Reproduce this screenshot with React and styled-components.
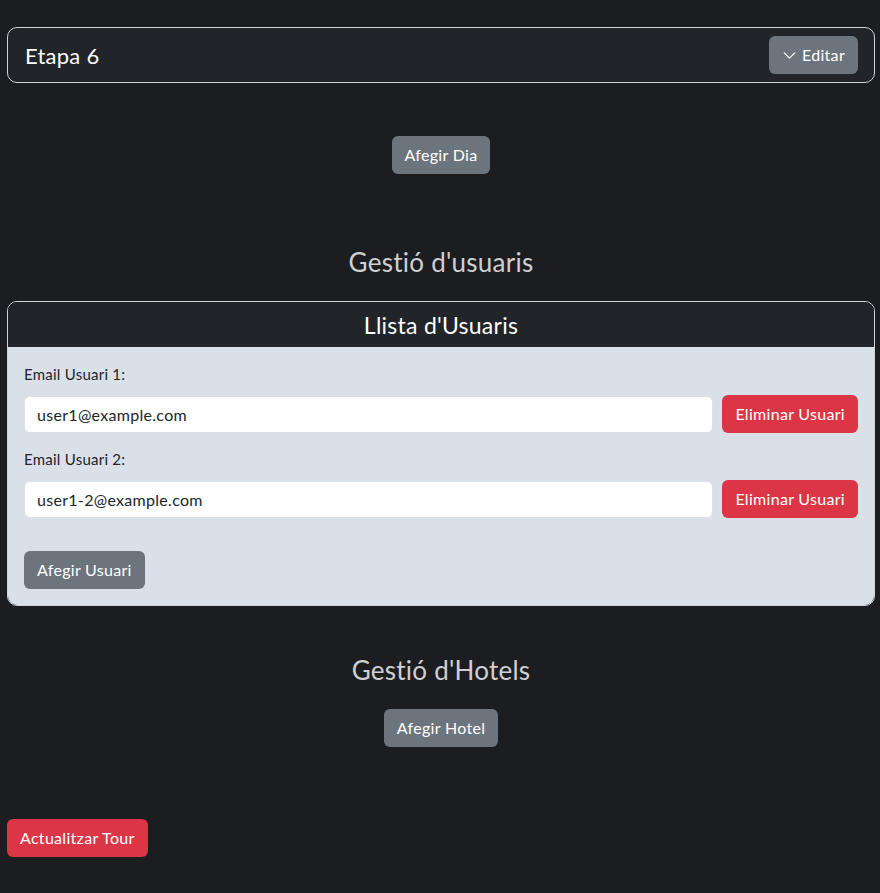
import styled, { createGlobalStyle } from "styled-components";
import { ChevronDown } from "lucide-react";

const GlobalStyle = createGlobalStyle`
    body {
        margin: 0;
        background: #1c1d20;
        font-family: "Lato", "Open Sans", sans-serif;
        color: #dee2e6;
        letter-spacing: 0.25px;
    }
    * { box-sizing: border-box; }
`;

const users = ["user1@example.com", "user1-2@example.com"];

export default function App() {
    return (
        <>
            <GlobalStyle />
            <Page>
                <StageCard>
                    <StageTitle>Etapa 6</StageTitle>
                    <Button $gap={2}>
                        <ChevronDown size={21} strokeWidth={1.4} />
                        Editar
                    </Button>
                </StageCard>

                <Center $top={53}>
                    <Button>Afegir Dia</Button>
                </Center>

                <SectionTitle $top={73}>Gestió d'usuaris</SectionTitle>

                <UsersCard>
                    <CardHeader>Llista d'Usuaris</CardHeader>
                    <CardBody>
                        {users.map((email, i) => (
                            <Field key={email}>
                                <Label>Email Usuari {i + 1}:</Label>
                                <Row>
                                    <Input type="email" defaultValue={email} />
                                    <Button $variant="danger">Eliminar Usuari</Button>
                                </Row>
                            </Field>
                        ))}
                        <AddRow>
                            <Button>Afegir Usuari</Button>
                        </AddRow>
                    </CardBody>
                </UsersCard>

                <SectionTitle $top={49}>Gestió d'Hotels</SectionTitle>
                <Center $top={23}>
                    <Button>Afegir Hotel</Button>
                </Center>

                <Footer>
                    <Button $variant="danger">Actualitzar Tour</Button>
                </Footer>
            </Page>
        </>
    );
}

const Page = styled.div`
    padding: 27px 5px 37px 7px;
    display: flex;
    flex-direction: column;
`;

const StageCard = styled.div`
    display: flex;
    align-items: center;
    justify-content: space-between;
    height: 56px;
    padding: 0 16px 0 17px;
    background: #212529;
    border: 1px solid #cfd2d6;
    border-radius: 10px;
`;

const StageTitle = styled.h5`
    margin: 0;
    font-size: 22px;
    font-weight: 400;
    color: #ffffff;
`;

const Button = styled.button`
    display: inline-flex;
    align-items: center;
    gap: ${(p) => p.$gap ?? 3}px;
    height: 38px;
    padding: 0 13px 0 ${(p) => (p.$gap ? 10 : 13)}px;
    font-family: inherit;
    font-size: 16px;
    font-weight: 400;
    line-height: 24px;
    letter-spacing: 0.3px;
    border: none;
    border-radius: 6px;
    cursor: pointer;
    color: #ffffff;
    background: ${(p) => (p.$variant === "danger" ? "#dc3545" : "#6c757d")};
    white-space: nowrap;
`;

const Center = styled.div`
    display: flex;
    justify-content: center;
    margin-top: ${(p) => p.$top}px;
`;

const SectionTitle = styled.h3`
    margin: ${(p) => p.$top}px 0 0;
    text-align: center;
    font-size: 26px;
    font-weight: 400;
    line-height: 31px;
    color: #cfd0d2;
`;

const UsersCard = styled.div`
    margin-top: 23px;
    border: 1px solid #cfd2d6;
    border-radius: 10px;
    overflow: hidden;
`;

const CardHeader = styled.div`
    height: 45px;
    display: flex;
    align-items: center;
    justify-content: center;
    background: #212529;
    color: #ffffff;
    font-size: 23px;
    font-weight: 400;
`;

const CardBody = styled.div`
    background: #dae0e8;
    padding: 16px 16px 16px;
`;

const Field = styled.div`
    margin-bottom: 15px;
    &:last-of-type { margin-bottom: 0; }
`;

const Label = styled.label`
    display: block;
    font-size: 15px;
    line-height: 22px;
    color: #212529;
    margin-bottom: 10px;
`;

const Row = styled.div`
    display: flex;
    gap: 9px;
    align-items: center;
`;

const Input = styled.input`
    flex: 1;
    height: 37px;
    padding: 0 12px;
    font-family: inherit;
    font-size: 16px;
    letter-spacing: 0.3px;
    color: #212529;
    background: #ffffff;
    border: 1px solid #dee2e6;
    border-radius: 6px;
    outline: none;
`;

const AddRow = styled.div`
    margin-top: 33px;
`;

const Footer = styled.div`
    margin-top: 72px;
`;
